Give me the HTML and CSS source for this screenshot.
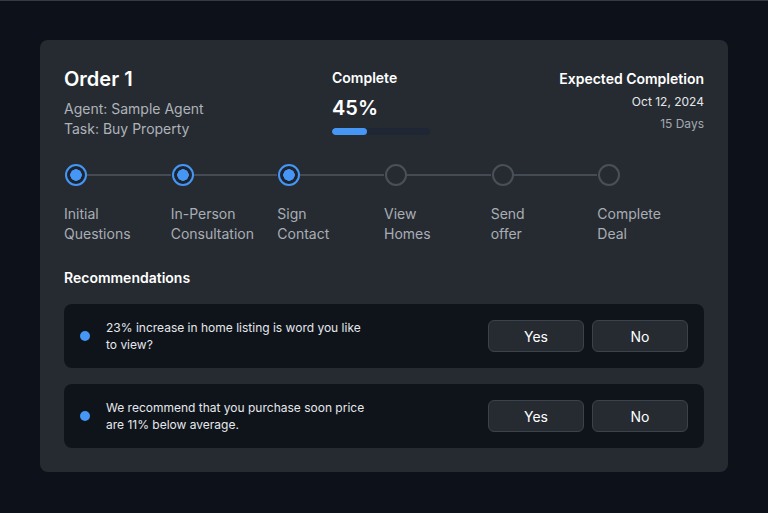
FILE: index.html
```html
<!DOCTYPE html>
<html lang="en">
<head>
<meta charset="utf-8">
<title>Order 1</title>
<link rel="stylesheet" href="styles.css">
</head>
<body>
<main class="card">
  <header class="head">
    <div class="order">
      <h1 class="order-title">Order 1</h1>
      <p class="meta meta-first">Agent: Sample Agent</p>
      <p class="meta">Task: Buy Property</p>
    </div>
    <div class="progress">
      <div class="progress-label">Complete</div>
      <div class="progress-value">45%</div>
      <div class="bar"><div class="bar-fill" style="width:36%"></div></div>
    </div>
    <div class="expected">
      <div class="expected-label">Expected Completion</div>
      <div class="expected-date">Oct 12, 2024</div>
      <div class="expected-days">15 Days</div>
    </div>
  </header>

  <ol class="steps">
    <li class="step done"><div class="node"><span class="circle"></span><span class="line"></span></div><div class="label">Initial<br>Questions</div></li>
    <li class="step done"><div class="node"><span class="circle"></span><span class="line"></span></div><div class="label">In-Person<br>Consultation</div></li>
    <li class="step done"><div class="node"><span class="circle"></span><span class="line"></span></div><div class="label">Sign<br>Contact</div></li>
    <li class="step"><div class="node"><span class="circle"></span><span class="line"></span></div><div class="label">View<br>Homes</div></li>
    <li class="step"><div class="node"><span class="circle"></span><span class="line"></span></div><div class="label">Send<br>offer</div></li>
    <li class="step last"><div class="node"><span class="circle"></span></div><div class="label">Complete<br>Deal</div></li>
  </ol>

  <h2 class="rec-title">Recommendations</h2>
  <div class="recs">
    <div class="rec">
      <span class="dot"></span>
      <p class="rec-text">23% increase in home listing is word you like to view?</p>
      <div class="actions"><button class="btn">Yes</button><button class="btn">No</button></div>
    </div>
    <div class="rec">
      <span class="dot"></span>
      <p class="rec-text">We recommend that you purchase soon price are 11% below average.</p>
      <div class="actions"><button class="btn">Yes</button><button class="btn">No</button></div>
    </div>
  </div>
</main>
</body>
</html>
```

FILE: styles.css
```css
* { box-sizing: border-box; }
html, body { margin: 0; padding: 0; }
body {
  background: #0d1119;
  border-top: 1px solid #363b43;
  height: 513px;
  overflow: hidden;
  font-family: "Inter", "Noto Sans", sans-serif;
  color: #f2f4f6;
}
.card {
  margin: 39px 0 0 40px;
  width: 688px;
  height: 432px;
  background: #262b32;
  border-radius: 8px;
  padding: 24px 24px 24px 24px;
}
.head {
  display: grid;
  grid-template-columns: 268px 1fr auto;
  height: 73px;
}
.order { padding-top: 1px; }
.order-title {
  margin: 0;
  font-size: 20px;
  line-height: 28px;
  font-weight: 600;
  color: #ffffff;
}
.meta {
  margin: 0;
  font-size: 14px;
  line-height: 20px;
  color: #aeb3b9;
}
.meta-first { margin-top: 6px; }
.progress { padding-top: 4px; }
.progress-label {
  font-size: 14px;
  line-height: 20px;
  font-weight: 600;
  color: #ffffff;
}
.progress-value {
  margin-top: 6px;
  font-size: 20px;
  line-height: 28px;
  font-weight: 600;
  color: #ffffff;
}
.bar {
  margin-top: 6px;
  width: 98px;
  height: 7px;
  border-radius: 4px;
  background: #1e2733;
  overflow: hidden;
}
.bar-fill {
  height: 100%;
  background: #4596f5;
  border-radius: 4px;
}
.expected { text-align: right; padding-top: 5px; }
.expected-label {
  font-size: 14px;
  line-height: 20px;
  font-weight: 600;
  color: #ffffff;
}
.expected-date {
  margin-top: 4px;
  font-size: 12px;
  line-height: 18px;
  color: #e4e7ea;
}
.expected-days {
  margin-top: 5px;
  font-size: 12px;
  line-height: 16px;
  color: #a3a9b0;
}
.steps {
  list-style: none;
  margin: 27px 0 0 0;
  padding: 0;
  display: grid;
  grid-template-columns: repeat(6, 1fr);
}
.node {
  display: flex;
  align-items: center;
  height: 22px;
}
.circle {
  flex: none;
  width: 22px;
  height: 22px;
  margin-left: 1px;
  border-radius: 50%;
  border: 2px solid #4a5058;
  background: #262b32;
}
.step.done .circle {
  border: 2.5px solid #4596f5;
  background: radial-gradient(circle, #4596f5 0 5.5px, #1d2530 6px);
}
.line {
  flex: 1;
  height: 1.5px;
  background: #454b53;
}
.label {
  margin-top: 18px;
  font-size: 14px;
  line-height: 20px;
  color: #a9aeb4;
}
.rec-title {
  margin: 24px 0 0 0;
  font-size: 14px;
  line-height: 20px;
  font-weight: 600;
  color: #ffffff;
}
.recs {
  margin-top: 16px;
  display: flex;
  flex-direction: column;
  gap: 16px;
}
.rec {
  height: 64px;
  background: #0f141b;
  border-radius: 8px;
  display: flex;
  align-items: center;
  padding: 0 16px;
}
.dot {
  flex: none;
  width: 10px;
  height: 10px;
  border-radius: 50%;
  background: #4596f5;
}
.rec-text {
  margin: 0 0 0 16px;
  width: 260px;
  font-size: 12px;
  line-height: 17px;
  color: #e6e8eb;
}
.actions {
  margin-left: auto;
  display: flex;
  gap: 8px;
}
.btn {
  width: 96px;
  height: 32px;
  border-radius: 6px;
  border: 1px solid #3c424a;
  background: #262b32;
  color: #ffffff;
  font-family: "Inter", "Noto Sans", sans-serif;
  font-size: 14px;
  font-weight: 400;
  padding: 0;
}
```
